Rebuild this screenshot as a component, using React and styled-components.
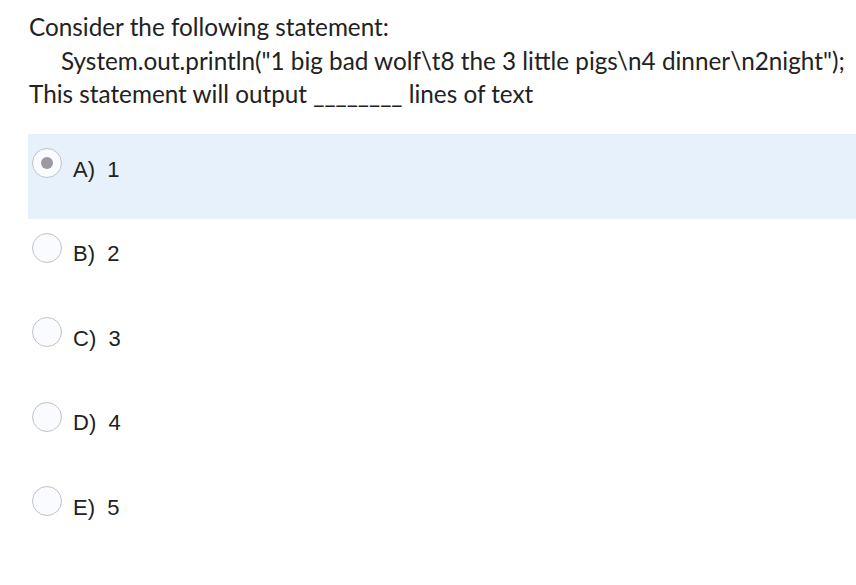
import React from 'react'
import styled, { createGlobalStyle } from 'styled-components'

const GlobalStyle = createGlobalStyle`
  body {
    margin: 0;
    background: #ffffff;
  }
`

const Page = styled.div`
  width: 856px;
  height: 585px;
  overflow: hidden;
  background: #ffffff;
  padding-top: 10px;
  box-sizing: border-box;
`

const Question = styled.div`
  font-family: Lato, 'Liberation Sans', sans-serif;
  font-size: 24.3px;
  line-height: 33.5px;
  color: #222;
  padding-left: 29px;
  white-space: nowrap;
`

const Line = styled.div`
  padding-left: ${(props) => (props.indent ? '32px' : '0')};
`

const Answers = styled.div`
  margin-top: 23.5px;
  margin-left: 28px;
`

const Row = styled.div`
  display: flex;
  align-items: flex-start;
  height: 84.6px;
  padding: 14px 0 0 4px;
  box-sizing: border-box;
  background: ${(props) => (props.selected ? '#e7f1fb' : 'transparent')};
`

const Radio = styled.span`
  width: 30px;
  height: 30px;
  border-radius: 50%;
  border: 1px solid #c2c2c4;
  background: #f9fbfe;
  box-sizing: border-box;
  display: flex;
  align-items: center;
  justify-content: center;
  flex-shrink: 0;
`

const Dot = styled.span`
  width: 12px;
  height: 12px;
  border-radius: 50%;
  background: #9a9aa0;
`

const Label = styled.span`
  font-family: 'Liberation Sans', Arial, sans-serif;
  font-size: 22px;
  line-height: 24px;
  color: #222;
  margin: 9.5px 0 0 11px;
  white-space: pre;
`

const options = [
  ['A)', '1'],
  ['B)', '2'],
  ['C)', '3'],
  ['D)', '4'],
  ['E)', '5'],
]

export default function App() {
  return (
    <Page>
      <GlobalStyle />
      <Question>
        <Line>Consider the following statement:</Line>
        <Line indent>
          System.out.println("1 big bad wolf\t8 the 3 little pigs\n4
          dinner\n2night");
        </Line>
        <Line>This statement will output ________ lines of text</Line>
      </Question>
      <Answers>
        {options.map(([letter, value], i) => (
          <Row key={letter} selected={i === 0}>
            <Radio>{i === 0 && <Dot />}</Radio>
            <Label>{`${letter}  ${value}`}</Label>
          </Row>
        ))}
      </Answers>
    </Page>
  )
}
